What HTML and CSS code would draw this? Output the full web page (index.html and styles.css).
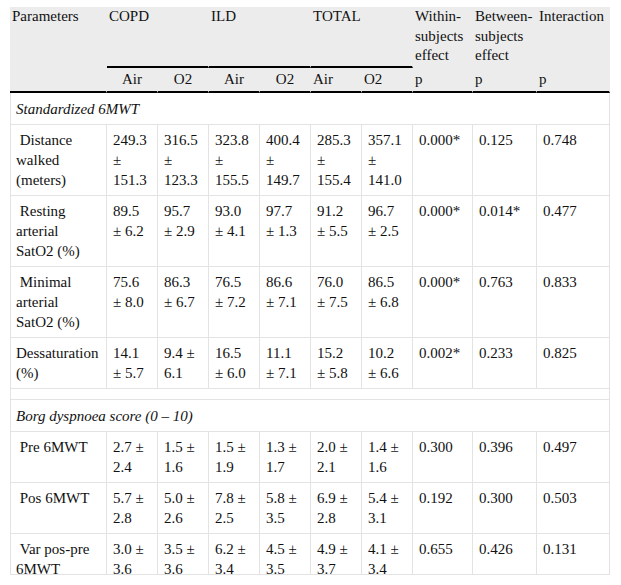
FILE: index.html
```html
<!DOCTYPE html>
<html>
<head>
<meta charset="utf-8">
<link rel="stylesheet" href="styles.css">
</head>
<body>
<div class="frame">
<table class="data">
  <colgroup>
    <col class="c-param">
    <col class="c-val"><col class="c-val"><col class="c-val"><col class="c-val"><col class="c-val"><col class="c-val">
    <col class="c-within"><col class="c-between"><col class="c-inter">
  </colgroup>
  <thead>
    <tr class="group">
      <th class="h first rule" rowspan="2">Parameters</th>
      <th class="h rule" colspan="2">COPD</th>
      <th class="h rule" colspan="2">ILD</th>
      <th class="h rule" colspan="2">TOTAL</th>
      <th class="h">Within-subjects effect</th>
      <th class="h">Between-subjects effect</th>
      <th class="h">Interaction</th>
    </tr>
    <tr class="sub">
      <th class="h rule center">Air</th>
      <th class="h rule center">O2</th>
      <th class="h rule center">Air</th>
      <th class="h rule center">O2</th>
      <th class="h rule">Air</th>
      <th class="h rule">O2</th>
      <th class="h rule">p</th>
      <th class="h rule">p</th>
      <th class="h rule">p</th>
    </tr>
  </thead>
  <tbody>
    <tr><td class="first section" colspan="10">Standardized 6MWT</td></tr>
    <tr>
      <td class="first">&nbsp;Distance walked (meters)</td>
      <td>249.3 ± 151.3</td><td>316.5 ± 123.3</td><td>323.8 ± 155.5</td><td>400.4 ± 149.7</td><td>285.3 ± 155.4</td><td>357.1 ± 141.0</td>
      <td>0.000*</td><td>0.125</td><td>0.748</td>
    </tr>
    <tr>
      <td class="first">&nbsp;Resting arterial<br>SatO2 (%)</td>
      <td>89.5 ± 6.2</td><td>95.7 ± 2.9</td><td>93.0 ± 4.1</td><td>97.7 ± 1.3</td><td>91.2 ± 5.5</td><td>96.7 ± 2.5</td>
      <td>0.000*</td><td>0.014*</td><td>0.477</td>
    </tr>
    <tr>
      <td class="first">&nbsp;Minimal arterial<br>SatO2 (%)</td>
      <td>75.6 ± 8.0</td><td>86.3 ± 6.7</td><td>76.5 ± 7.2</td><td>86.6 ± 7.1</td><td>76.0 ± 7.5</td><td>86.5 ± 6.8</td>
      <td>0.000*</td><td>0.763</td><td>0.833</td>
    </tr>
    <tr>
      <td class="first">Dessaturation (%)</td>
      <td>14.1 ± 5.7</td><td>9.4 ± 6.1</td><td>16.5 ± 6.0</td><td>11.1 ± 7.1</td><td>15.2 ± 5.8</td><td>10.2 ± 6.6</td>
      <td>0.002*</td><td>0.233</td><td>0.825</td>
    </tr>
    <tr><td class="first spacer" colspan="10"></td></tr>
    <tr><td class="first section" colspan="10">Borg dyspnoea score (0 – 10)</td></tr>
    <tr>
      <td class="first">&nbsp;Pre 6MWT</td>
      <td>2.7 ± 2.4</td><td>1.5 ± 1.6</td><td>1.5 ± 1.9</td><td>1.3 ± 1.7</td><td>2.0 ± 2.1</td><td>1.4 ± 1.6</td>
      <td>0.300</td><td>0.396</td><td>0.497</td>
    </tr>
    <tr>
      <td class="first">&nbsp;Pos 6MWT</td>
      <td>5.7 ± 2.8</td><td>5.0 ± 2.6</td><td>7.8 ± 2.5</td><td>5.8 ± 3.5</td><td>6.9 ± 2.8</td><td>5.4 ± 3.1</td>
      <td>0.192</td><td>0.300</td><td>0.503</td>
    </tr>
    <tr>
      <td class="first">&nbsp;Var pos-pre 6MWT</td>
      <td>3.0 ± 3.6</td><td>3.5 ± 3.6</td><td>6.2 ± 3.4</td><td>4.5 ± 3.5</td><td>4.9 ± 3.7</td><td>4.1 ± 3.4</td>
      <td>0.655</td><td>0.426</td><td>0.131</td>
    </tr>
  </tbody>
</table>
</div>
</body>
</html>
```

FILE: styles.css
```css
html, body {
  margin: 0;
  padding: 0;
  background: #fff;
}
body {
  padding: 7px 0 0 10px;
  font-family: "Liberation Serif", "Times New Roman", Times, serif;
  font-size: 15px;
  line-height: 20px;
  color: #111;
}
.frame {
  width: 600px;
  height: 567px;
  overflow: hidden;
  border-bottom: 1px solid #e3e3e3;
}
.data {
  width: 600px;
  table-layout: fixed;
  border-collapse: separate;
  border-spacing: 0;
}
.c-param { width: 97px; }
.c-val { width: 51px; }
.c-within { width: 60px; }
.c-between { width: 64px; }
.c-inter { width: 73px; }

.h {
  background: #ececec;
  font-weight: normal;
  text-align: left;
  vertical-align: top;
  line-height: 19.5px;
  padding: 0 0 0 2px;
  border-right: 1px solid #ececec;
  border-bottom: 2px solid #ececec;
}
.h.rule { border-bottom-color: #000; }
.h.center { text-align: center; padding-left: 0; }
.sub .h { padding-top: 2px; padding-bottom: 1.5px; }

td {
  vertical-align: top;
  padding: 5px 7px 5px 6px;
  border-right: 1px solid #e3e3e3;
  border-bottom: 1px solid #e3e3e3;
}
td.first { border-left: 1px solid #e3e3e3; padding-left: 5px; padding-right: 6px; }
td.section { font-style: italic; padding-top: 6px; }
td.spacer { padding: 5px 0; }
```
